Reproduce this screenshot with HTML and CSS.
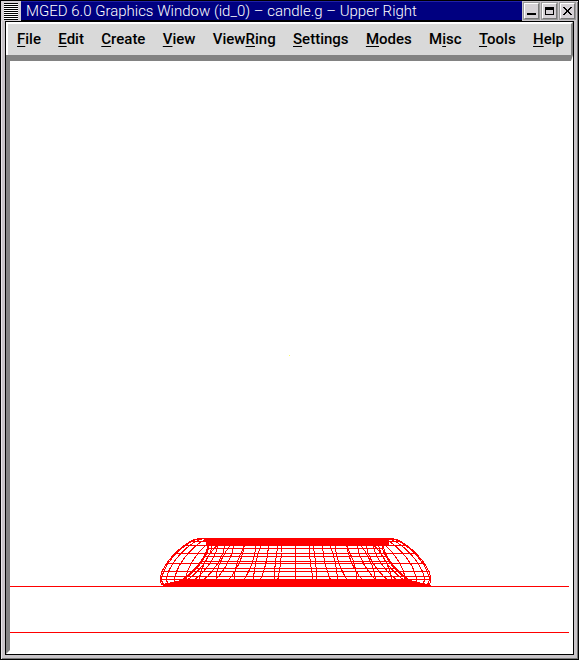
FILE: index.html
```html
<!DOCTYPE html>
<html lang="en">
<head>
<meta charset="utf-8">
<title>MGED 6.0 Graphics Window</title>
<link rel="stylesheet" href="styles.css">
</head>
<body>
<div class="window">
  <header class="titlebar">
    <button class="window-menu" aria-label="Window menu"></button>
    <h1 class="title">MGED 6.0 Graphics Window (id_0) – candle.g – Upper Right</h1>
    <div class="controls">
      <button class="control" aria-label="Minimize"><svg viewBox="0 0 13 13"><path d="M2 8h9v2H2z"/></svg></button>
      <button class="control" aria-label="Maximize"><svg viewBox="0 0 13 13"><path fill-rule="evenodd" d="M2 2h9v8H2zM3 5v4h7V5z"/></svg></button>
      <button class="control" aria-label="Close"><svg viewBox="0 0 13 13"><path d="M2 2h2v1h1v1h1v1h1V4h1V3h1V2h2v1h-1v1H9v1H8v2h1v1h1v1h1v1H9V9H8V8H7V7H6v1H5v1H4v1H2V9h1V8h1V7h1V5H4V4H3V3H2z"/></svg></button>
    </div>
  </header>
  <main class="client">
    <nav class="menubar">
      <button class="menu"><u>F</u>ile</button>
      <button class="menu"><u>E</u>dit</button>
      <button class="menu"><u>C</u>reate</button>
      <button class="menu"><u>V</u>iew</button>
      <button class="menu">View<u>R</u>ing</button>
      <button class="menu"><u>S</u>ettings</button>
      <button class="menu"><u>M</u>odes</button>
      <button class="menu">M<u>i</u>sc</button>
      <button class="menu"><u>T</u>ools</button>
      <button class="menu"><u>H</u>elp</button>
    </nav>
    <div class="view">
      <svg class="scene" viewBox="10 61 561 589" role="img" aria-label="Wireframe of candle.g">
        <path class="wire" d="M10 586.5H569M10 632.5H569"/>
        <path class="fill" d="M203 538H389V545H207zM181 580H410L431 585V586H163V584z"/>
        <path class="wire" id="torus"/>
        <path class="origin" d="M289 355h1v1h-1z"/>
      </svg>
    </div>
  </main>
</div>
<script src="wireframe.js"></script>
</body>
</html>
```
FILE: styles.css
```css
* {
  box-sizing: border-box;
}

body {
  margin: 0;
  background: #000;
  color: #000;
}

button {
  margin: 0;
  padding: 0;
  border: 0;
  background: none;
  color: inherit;
}

.window {
  min-height: 100vh;
  padding: 0 4px 4px 4px;
  border: 1px solid #000;
  background: #c9c5c9;
  box-shadow: inset 1px 1px #e8e4e8, inset -1px -1px #777;
  display: flex;
  flex-direction: column;
}

.titlebar {
  display: flex;
  height: 20px;
  margin: 0 -3px 0 -4px;
  background: #000080;
}

.window-menu {
  width: 20px;
  border: solid #d6d2d6;
  border-width: 2px 3px 1px 3px;
  background: repeating-linear-gradient(#000 0 1px, #fff 1px 2px) padding-box;
}

.title {
  flex: 1;
  margin: 0;
  padding-left: 5px;
  border: solid #000;
  border-width: 1px 0;
  border-top-color: #2020a8;
  color: #fff;
  font: 300 15px/19px Roboto, sans-serif;
  white-space: nowrap;
}

.controls {
  display: flex;
  gap: 3px;
  padding: 2px;
  background: #c9c5c9;
}

.control {
  width: 15px;
  height: 16px;
  border: 1px solid;
  border-color: #fff #777 #777 #fff;
  outline: 1px solid #999;
  background: #d6d2d6;
}

.control svg {
  display: block;
  width: 13px;
  height: 13px;
  shape-rendering: crispEdges;
}

.client {
  flex: 1;
  display: flex;
  flex-direction: column;
  border: 1px solid #000;
  background: #fff;
}

.menubar {
  display: flex;
  justify-content: space-between;
  height: 33px;
  padding: 0 7px 2px 9px;
  border: solid;
  border-width: 2px 2px 0 2px;
  border-color: #fff #828282 #828282 #fff;
  background: #d9d9d9;
}

.menu {
  font: 500 15px/28px Roboto, sans-serif;
}

.menu u {
  text-decoration-thickness: 1px;
  text-underline-offset: 2px;
}

.view {
  flex: 1;
  border: solid;
  border-width: 6px 2px 4px 4px;
  border-color: #828282 #fff #fff #828282;
}

.scene {
  display: block;
  width: 100%;
  shape-rendering: crispEdges;
}

.wire {
  fill: none;
  stroke: #f00;
}

.fill {
  fill: #f00;
}

.origin {
  fill: #ff6;
}
```
FILE: wireframe.js
```js
// Side view of an elliptical torus whose section leans inward at 45 degrees.
const CENTER = 295.5;
const SECTION = { radius: 111.5, y: 562, major: 31.5, minor: 12.5 };

function sectionPoint(phi) {
  const a = SECTION.major * Math.cos(phi) * Math.SQRT1_2;
  const b = SECTION.minor * Math.sin(phi) * Math.SQRT1_2;
  return { r: SECTION.radius - a + b, y: SECTION.y - a - b };
}

function reachAt(y, outer) {
  const near = [];
  for (let i = 0; i < 720; i++) {
    const p = sectionPoint(i * Math.PI / 360);
    if (Math.abs(p.y - y) < 0.6) near.push(p.r);
  }
  return outer ? Math.max(...near) : Math.min(...near);
}

let d = "";
for (let step = 0; step <= 20; step++) {
  const scale = Math.cos(step * Math.PI / 20);
  for (let i = 0; i <= 24; i++) {
    const p = sectionPoint(i * Math.PI / 12);
    d += (i ? "L" : "M") + (CENTER + p.r * scale).toFixed(1) + " " + p.y.toFixed(1);
  }
}

const rings = [
  [541.5, true], [545.5, true], [548.5, false], [553.5, true], [556.5, false],
  [561.5, false], [563.5, true], [568.5, false], [571.5, true], [576.5, true],
  [579.5, true]
];
for (const [y, outer] of rings) {
  const r = reachAt(y, outer);
  d += `M${CENTER - r} ${y}H${CENTER + r}`;
}
document.getElementById("torus").setAttribute("d", d);
```
